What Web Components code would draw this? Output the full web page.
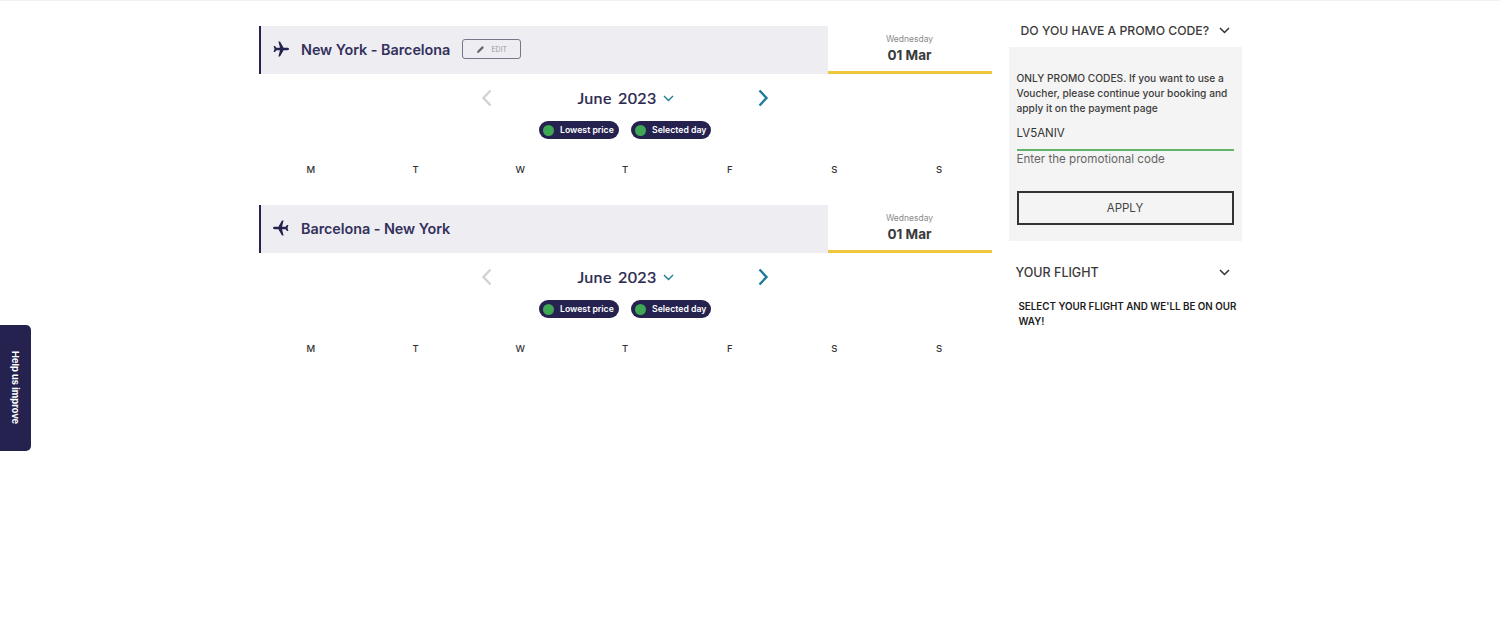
<!DOCTYPE html>
<html lang="en">
<head>
<meta charset="utf-8">
<title>Flights</title>
<style>
    html, body { margin: 0; height: 100%; background: #fff; }
    body { font-family: "Inter", "Liberation Sans", sans-serif; color: #25224f; overflow: hidden; }
    .top-line { height: 1px; background: #f1f1f1; }
</style>
</head>
<body>
<div class="top-line"></div>
<booking-page>
    <div slot="main">
        <flight-leg from="New York - Barcelona" day="Wednesday" date="01 Mar" editable></flight-leg>
        <flight-leg from="Barcelona - New York" day="Wednesday" date="01 Mar" back></flight-leg>
    </div>
    <div slot="side">
        <promo-box></promo-box>
        <flight-summary></flight-summary>
    </div>
</booking-page>
<help-tab></help-tab>

<script>
class BookingPage extends HTMLElement {
    constructor() {
        super();
        this.attachShadow({ mode: 'open' });
        this.shadowRoot.innerHTML = `
            <style>
                :host { display: grid; grid-template-columns: 733px 233px; column-gap: 17px; width: 983px; margin: 0 auto; padding-top: 12px; }
            </style>
            <slot name="main"></slot>
            <slot name="side"></slot>
        `;
    }
}

class FlightLeg extends HTMLElement {
    constructor() {
        super();
        this.attachShadow({ mode: 'open' });
        const back = this.hasAttribute('back');
        const edit = this.hasAttribute('editable') ? `
            <span class="edit">
                <svg width="9" height="9" viewBox="0 0 10 10"><path d="M1 9l.6-2.4L7 1.2 8.800 3 3.400 8.400z" fill="#666"/></svg>
                EDIT
            </span>` : '';
        this.shadowRoot.innerHTML = `
            <style>
                :host { display: block; height: 179px; padding-top: 13px; box-sizing: border-box; }
                .head { display: grid; grid-template-columns: 569px 164px; height: 48px; }
                .route { display: flex; align-items: center; background: #ededf2; border-left: 2px solid #25224f; padding: 0 0 2px 11px; box-sizing: border-box; }
                .route svg.plane { width: 18px; height: 18px; margin-right: 11.5px; flex: none; ${back ? 'transform: scaleX(-1);' : ''} }
                .name { font-size: 14.4px; font-weight: 600; color: #34315c; letter-spacing: -.05px; }
                .edit { display: flex; align-items: center; justify-content: center; gap: 6px; width: 57px; height: 18px; margin-left: 12px; border: 1px solid #77778a; border-radius: 3px; font-size: 7px; color: #9a9aa2; }
                .date { display: flex; flex-direction: column; align-items: center; border-bottom: 3px solid #f0c63f; box-sizing: border-box; padding-top: 8px; }
                .day { font-size: 8.5px; color: #8a8a8a; line-height: 11px; }
                .num { font-size: 13.5px; font-weight: 700; color: #3a3a3a; line-height: 20px; }
                .nav { display: flex; align-items: center; justify-content: center; height: 24px; margin-top: 12px; }
                .month { display: flex; align-items: center; justify-content: center; width: 264px; gap: 6.500px; padding: 0 0 2px 1.500px; box-sizing: border-box; font-family: "Lato", "Liberation Sans", sans-serif; font-size: 16px; font-weight: 500; letter-spacing: .35px; color: #2c2a50; word-spacing: 2px; -webkit-text-stroke: .2px #2c2a50; }
                .month svg { margin-top: 2px; }
                .chips { display: flex; justify-content: center; gap: 12px; margin-top: 11px; }
                .chip { display: flex; align-items: center; height: 18px; border-radius: 9px; background: #25224f; color: #fff; font-size: 8.7px; font-weight: 600; box-sizing: border-box; padding-left: 4px; gap: 6px; }
                .chip i { display: block; width: 11px; height: 11px; border-radius: 50%; background: #3fa654; }
                .week { display: grid; grid-template-columns: repeat(7, 1fr); margin-top: 24px; text-align: center; font-size: 9.5px; font-weight: 500; color: #333; line-height: 14px; }
            </style>
            <div class="head">
                <div class="route">
                    <svg class="plane" viewBox="0 0 18 18"><path d="M17 9c0-.8-.8-1.200-1.600-1.200h-3.800L8 1.600H6.400l1.600 6.200H4.400L3 6.100H1.600L2.500 9l-.9 2.900H3l1.400-1.700H8l-1.600 6.200H8l3.600-6.200h3.800C16.200 10.200 17 9.800 17 9z" fill="#25224f"/></svg>
                    <span class="name">${this.getAttribute('from')}</span>
                    ${edit}
                </div>
                <div class="date">
                    <span class="day">${this.getAttribute('day')}</span>
                    <span class="num">${this.getAttribute('date')}</span>
                </div>
            </div>
            <div class="nav">
                <svg width="12" height="18" viewBox="0 0 12 18"><path d="M9.500 1.500L2.500 9l7 7.500" fill="none" stroke="#d2d2d2" stroke-width="2.4"/></svg>
                <div class="month">
                    <span>June 2023</span>
                    <svg width="11" height="7" viewBox="0 0 11 7"><path d="M1 1l4.500 4.500L10 1" fill="none" stroke="#1f7a9c" stroke-width="1.4"/></svg>
                </div>
                <svg width="12" height="18" viewBox="0 0 12 18"><path d="M2.500 1.500l7 7.500-7 7.500" fill="none" stroke="#1f7a9c" stroke-width="2.4"/></svg>
            </div>
            <div class="chips">
                <span class="chip" style="width:80px"><i></i>Lowest price</span>
                <span class="chip" style="width:80px"><i></i>Selected day</span>
            </div>
            <div class="week"><span>M</span><span>T</span><span>W</span><span>T</span><span>F</span><span>S</span><span>S</span></div>
        `;
    }
}

class PromoBox extends HTMLElement {
    constructor() {
        super();
        this.attachShadow({ mode: 'open' });
        this.shadowRoot.innerHTML = `
            <style>
                :host { display: block; }
                .title { display: flex; align-items: center; height: 34px; padding-left: 12px; gap: 10px; font-size: 12.2px; font-weight: 500; color: #3a3a3a; }
                .panel { background: #f4f4f4; height: 194px; box-sizing: border-box; padding: 24px 8px 0; }
                p { margin: 0; font-size: 10.2px; font-weight: 500; line-height: 15.2px; color: #3c3c3c; }
                .code { font-size: 11.5px; color: #333; line-height: 16px; margin-top: 8px; padding-bottom: 8px; border-bottom: 2px solid #62b46c; }
                .hint { font-size: 11.6px; color: #666; line-height: 16px; }
                button { display: block; width: 100%; height: 34px; margin-top: 24px; border: 2px solid #333; background: transparent; font: inherit; font-size: 11.5px; color: #444; }
            </style>
            <div class="title">DO YOU HAVE A PROMO CODE?
                <svg width="11" height="7" viewBox="0 0 11 7"><path d="M1 1l4.500 4.500L10 1" fill="none" stroke="#333" stroke-width="1.5"/></svg>
            </div>
            <div class="panel">
                <p>ONLY PROMO CODES. If you want to use a Voucher, please continue your booking and apply it on the payment page</p>
                <div class="code">LV5ANIV</div>
                <div class="hint">Enter the promotional code</div>
                <button>APPLY</button>
            </div>
        `;
    }
}

class FlightSummary extends HTMLElement {
    constructor() {
        super();
        this.attachShadow({ mode: 'open' });
        this.shadowRoot.innerHTML = `
            <style>
                :host { display: block; padding-top: 21px; }
                .title { display: flex; align-items: center; justify-content: space-between; height: 20px; padding: 0 12px 0 7px; font-size: 12.5px; font-weight: 500; color: #3a3a3a; }
                p { margin: 17px 0 0 10px; font-size: 9.8px; font-weight: 600; line-height: 15px; color: #1c1c1c; }
            </style>
            <div class="title">YOUR FLIGHT
                <svg width="11" height="7" viewBox="0 0 11 7"><path d="M1 1l4.500 4.500L10 1" fill="none" stroke="#333" stroke-width="1.5"/></svg>
            </div>
            <p>SELECT YOUR FLIGHT AND WE'LL BE ON OUR WAY!</p>
        `;
    }
}

class HelpTab extends HTMLElement {
    constructor() {
        super();
        this.attachShadow({ mode: 'open' });
        this.shadowRoot.innerHTML = `
            <style>
                :host { position: fixed; left: 0; top: 325px; width: 31px; height: 126px; display: flex; align-items: center; justify-content: center; background: #25224f; border-radius: 0 5px 5px 0; }
                span { writing-mode: vertical-rl; color: #fff; font-size: 9.3px; font-weight: 700; }
            </style>
            <span>Help us improve</span>
        `;
    }
}

customElements.define('booking-page', BookingPage);
customElements.define('flight-leg', FlightLeg);
customElements.define('promo-box', PromoBox);
customElements.define('flight-summary', FlightSummary);
customElements.define('help-tab', HelpTab);
</script>
</body>
</html>
